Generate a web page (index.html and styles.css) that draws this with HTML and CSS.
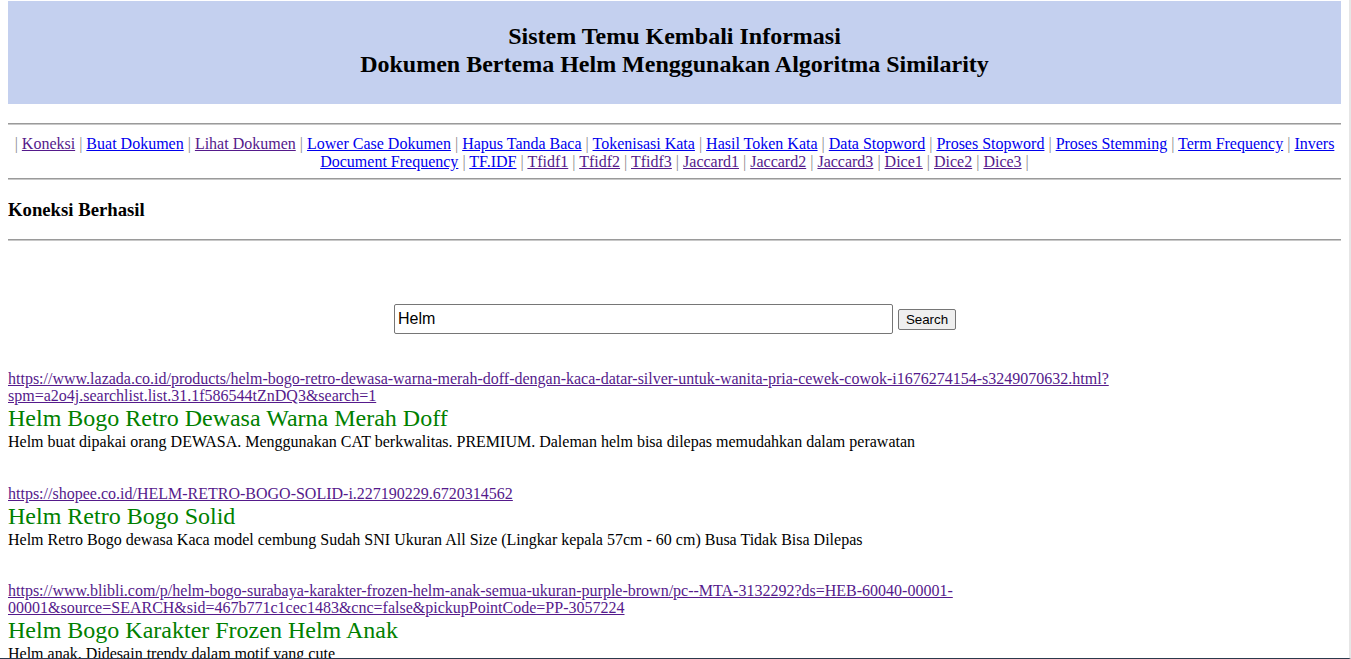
FILE: index.html
```html
<!DOCTYPE html>
<html lang="id">
<head>
<meta charset="utf-8">
<title>Sistem Temu Kembali Informasi</title>
<link rel="stylesheet" href="styles.css">
</head>
<body>
<div class="banner">
  <h2 class="banner-title">Sistem Temu Kembali Informasi<br>Dokumen Bertema Helm Menggunakan Algoritma Similarity</h2>
</div>
<hr class="rule rule-top">
<nav class="menu">
  <span class="sep">|</span> <a class="v" href="#">Koneksi</a> <span class="sep">|</span> <a href="#">Buat Dokumen</a> <span class="sep">|</span> <a class="v" href="#">Lihat Dokumen</a> <span class="sep">|</span> <a href="#">Lower Case Dokumen</a> <span class="sep">|</span> <a href="#">Hapus Tanda Baca</a> <span class="sep">|</span> <a href="#">Tokenisasi Kata</a> <span class="sep">|</span> <a href="#">Hasil Token Kata</a> <span class="sep">|</span> <a href="#">Data Stopword</a> <span class="sep">|</span> <a href="#">Proses Stopword</a> <span class="sep">|</span> <a href="#">Proses Stemming</a> <span class="sep">|</span> <a href="#">Term Frequency</a> <span class="sep">|</span> <a href="#">Invers Document Frequency</a> <span class="sep">|</span> <a href="#">TF.IDF</a> <span class="sep">|</span> <a class="v" href="#">Tfidf1</a> <span class="sep">|</span> <a class="v" href="#">Tfidf2</a> <span class="sep">|</span> <a class="v" href="#">Tfidf3</a> <span class="sep">|</span> <a class="v" href="#">Jaccard1</a> <span class="sep">|</span> <a class="v" href="#">Jaccard2</a> <span class="sep">|</span> <a class="v" href="#">Jaccard3</a> <span class="sep">|</span> <a class="v" href="#">Dice1</a> <span class="sep">|</span> <a class="v" href="#">Dice2</a> <span class="sep">|</span> <a class="v" href="#">Dice3</a> <span class="sep">|</span>
</nav>
<hr class="rule">
<h3 class="status">Koneksi Berhasil</h3>
<hr class="rule">
<form class="search">
  <input class="search-input" type="text" value="Helm">
  <button class="search-btn" type="button">Search</button>
</form>
<div class="results">
  <div class="result">
    <a class="result-url" href="#">https://www.lazada.co.id/products/helm-bogo-retro-dewasa-warna-merah-doff-dengan-kaca-datar-silver-untuk-wanita-pria-cewek-cowok-i1676274154-s3249070632.html?<br>spm=a2o4j.searchlist.list.31.1f586544tZnDQ3&amp;search=1</a>
    <div class="result-title">Helm Bogo Retro Dewasa Warna Merah Doff</div>
    <div class="result-desc">Helm buat dipakai orang DEWASA. Menggunakan CAT berkwalitas. PREMIUM. Daleman helm bisa dilepas memudahkan dalam perawatan</div>
  </div>
  <div class="result">
    <a class="result-url" href="#">https://shopee.co.id/HELM-RETRO-BOGO-SOLID-i.227190229.6720314562</a>
    <div class="result-title">Helm Retro Bogo Solid</div>
    <div class="result-desc">Helm Retro Bogo dewasa Kaca model cembung Sudah SNI Ukuran All Size (Lingkar kepala 57cm - 60 cm) Busa Tidak Bisa Dilepas</div>
  </div>
  <div class="result">
    <a class="result-url" href="#">https://www.blibli.com/p/helm-bogo-surabaya-karakter-frozen-helm-anak-semua-ukuran-purple-brown/pc--MTA-3132292?ds=HEB-60040-00001-<br>00001&amp;source=SEARCH&amp;sid=467b771c1cec1483&amp;cnc=false&amp;pickupPointCode=PP-3057224</a>
    <div class="result-title">Helm Bogo Karakter Frozen Helm Anak</div>
    <div class="result-desc">Helm anak. Didesain trendy dalam motif yang cute</div>
  </div>
</div>
<div class="frame"></div>
</body>
</html>
```
FILE: styles.css
```css
html, body {
  background: #ffffff;
}
body {
  margin: 1px 10px 0 8px;
  font-family: "Liberation Serif", "Times New Roman", serif;
  font-size: 16px;
  color: #000;
}
.banner {
  background: #c4d0ef;
  padding: 22px 0 26px;
}
.banner-title {
  margin: 0;
  text-align: center;
  font-size: 24px;
  font-weight: bold;
  line-height: 27.5px;
}
.rule {
  margin: 19px 0 8px;
  border: 0;
  height: 0;
  border-top: 1px solid #9a9a9a;
  border-bottom: 1px solid #c8c8c8;
}
.rule-top {
  margin-top: 19px;
  margin-bottom: 10px;
}
.menu {
  text-align: center;
  line-height: 18px;
  margin: 0;
}
.menu a {
  color: #0000ee;
}
.menu a.v {
  color: #551a8b;
}
.sep {
  color: #8a8a8a;
}
.menu + .rule {
  margin-top: 7px;
  margin-bottom: 0;
}
.status {
  margin: 19px 0 19px;
  font-size: 18.72px;
  line-height: 21px;
  font-weight: bold;
}
.status + .rule {
  margin: 0;
}
.search {
  display: flex;
  justify-content: center;
  align-items: center;
  gap: 5px;
  margin: 63px 0 0;
  padding-left: 1px;
}
.search-input {
  box-sizing: border-box;
  width: 499px;
  height: 30px;
  border: 1px solid #767676;
  border-radius: 2px;
  padding: 0 3px;
  font-family: "Liberation Sans", Arial, sans-serif;
  font-size: 16px;
  color: #000;
  background: #fff;
}
.search-btn {
  box-sizing: border-box;
  height: 21px;
  width: 58px;
  padding: 0;
  font-family: "Liberation Sans", Arial, sans-serif;
  font-size: 13.33px;
  color: #000;
  background: #efefef;
  border: 1px solid #767676;
  border-radius: 2px;
  margin-top: 1px;
}
.results {
  margin-top: 36px;
}
.result {
  margin-bottom: 33.5px;
}
.result-url {
  display: block;
  color: #551a8b;
  line-height: 17px;
}
.result-title {
  color: #008000;
  font-size: 24px;
  line-height: 29px;
}
.result-desc {
  line-height: 18px;
}
.frame {
  position: fixed;
  left: 0;
  top: 0;
  right: 0;
  bottom: 0;
  border-right: 2px solid #e6e6e6;
  border-bottom: 1px solid #2c3a4c;
  pointer-events: none;
}
```
